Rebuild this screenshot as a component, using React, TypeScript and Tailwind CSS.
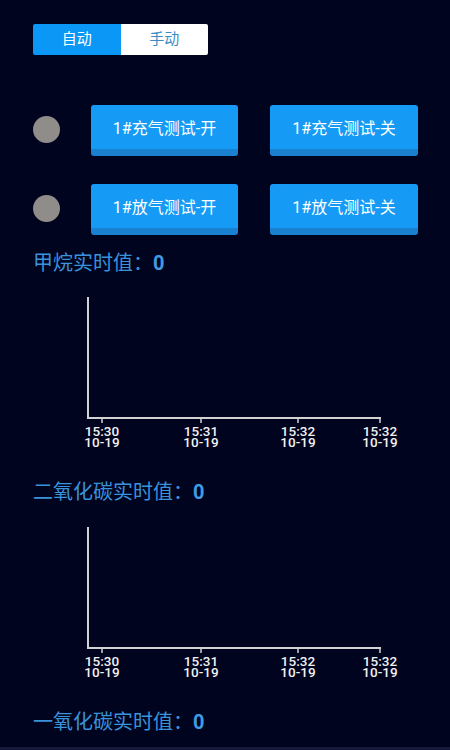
import { useState } from 'react'

const cjk = { fontFamily: 'Roboto, "Noto Sans CJK SC", sans-serif' }

const ticks = [
  { x: 22, time: '15:30', date: '10-19' },
  { x: 121, time: '15:31', date: '10-19' },
  { x: 218, time: '15:32', date: '10-19' },
  { x: 300, time: '15:32', date: '10-19' }
]

function ValueLabel({ name, value }: { name: string; value: number }) {
  return (
    <div className="h-[24px] flex items-center text-[20px] leading-[24px] text-[#3a92db]">
      <span>{name}：</span>
      <span className="font-bold text-[#3f9be4]">{value}</span>
    </div>
  )
}

function EmptyChart() {
  return (
    <div className="relative ml-[47px] w-[330px] h-[152px]">
      <svg width="330" height="130" className="block">
        <line x1="8" y1="0" x2="8" y2="121" stroke="#d2d2d2" strokeWidth="2" />
        <line x1="7" y1="121" x2="301" y2="121" stroke="#d2d2d2" strokeWidth="2" />
        {ticks.map((t, i) => (
          <line key={i} x1={t.x} y1="121" x2={t.x} y2="126" stroke="#d2d2d2" strokeWidth="1.5" />
        ))}
      </svg>
      {ticks.map((t, i) => (
        <div
          key={i}
          className="absolute top-[129px] -translate-x-1/2 whitespace-nowrap text-center text-[13.5px] leading-[10.5px] font-medium text-[#f2f2f2]"
          style={{ left: t.x, fontFamily: 'Roboto, sans-serif' }}
        >
          <div>{t.time}</div>
          <div>{t.date}</div>
        </div>
      ))}
    </div>
  )
}

function TestRow({ label }: { label: string }) {
  return (
    <div className="flex items-start h-[51px]">
      <div className="mt-[11px] w-[27px] h-[27px] rounded-full bg-[#8f8c8a]" />
      <button className="ml-[31px] w-[147px] h-[51px] rounded-[3px] bg-[#159bf5] border-b-[7px] border-[#1a80d0] text-white text-[16px] pt-[3px]">
        {label}-开
      </button>
      <button className="ml-[32px] w-[148px] h-[51px] rounded-[3px] bg-[#159bf5] border-b-[7px] border-[#1a80d0] text-white text-[16px] pt-[3px]">
        {label}-关
      </button>
    </div>
  )
}

export default function App() {
  const [mode, setMode] = useState<'auto' | 'manual'>('auto')

  return (
    <div className="w-[450px] h-[750px] overflow-hidden bg-[#01041f]" style={cjk}>
      <div className="pl-[33px] pt-[24px]">
        <div className="flex w-[175px] h-[31px] rounded-[2px] overflow-hidden text-[15px]">
          <button
            onClick={() => setMode('auto')}
            className={mode === 'auto' ? 'flex-1 bg-[#0a97f5] text-white' : 'flex-1 bg-white text-[#3b8dc6]'}
          >
            自动
          </button>
          <button
            onClick={() => setMode('manual')}
            className={mode === 'manual' ? 'flex-1 bg-[#0a97f5] text-white' : 'flex-1 bg-white text-[#3b8dc6]'}
          >
            手动
          </button>
        </div>

        <div className="mt-[50px] flex flex-col gap-[28px]">
          <TestRow label="1#充气测试" />
          <TestRow label="1#放气测试" />
        </div>

        <div className="mt-[16px]">
          <ValueLabel name="甲烷实时值" value={0} />
        </div>
        <div className="mt-[22px]">
          <EmptyChart />
        </div>

        <div className="mt-[31px]">
          <ValueLabel name="二氧化碳实时值" value={0} />
        </div>
        <div className="mt-[23px]">
          <EmptyChart />
        </div>

        <div className="mt-[31px]">
          <ValueLabel name="一氧化碳实时值" value={0} />
        </div>
      </div>
      <div className="mt-[13px] h-[4px] bg-[#15183a]" />
    </div>
  )
}
